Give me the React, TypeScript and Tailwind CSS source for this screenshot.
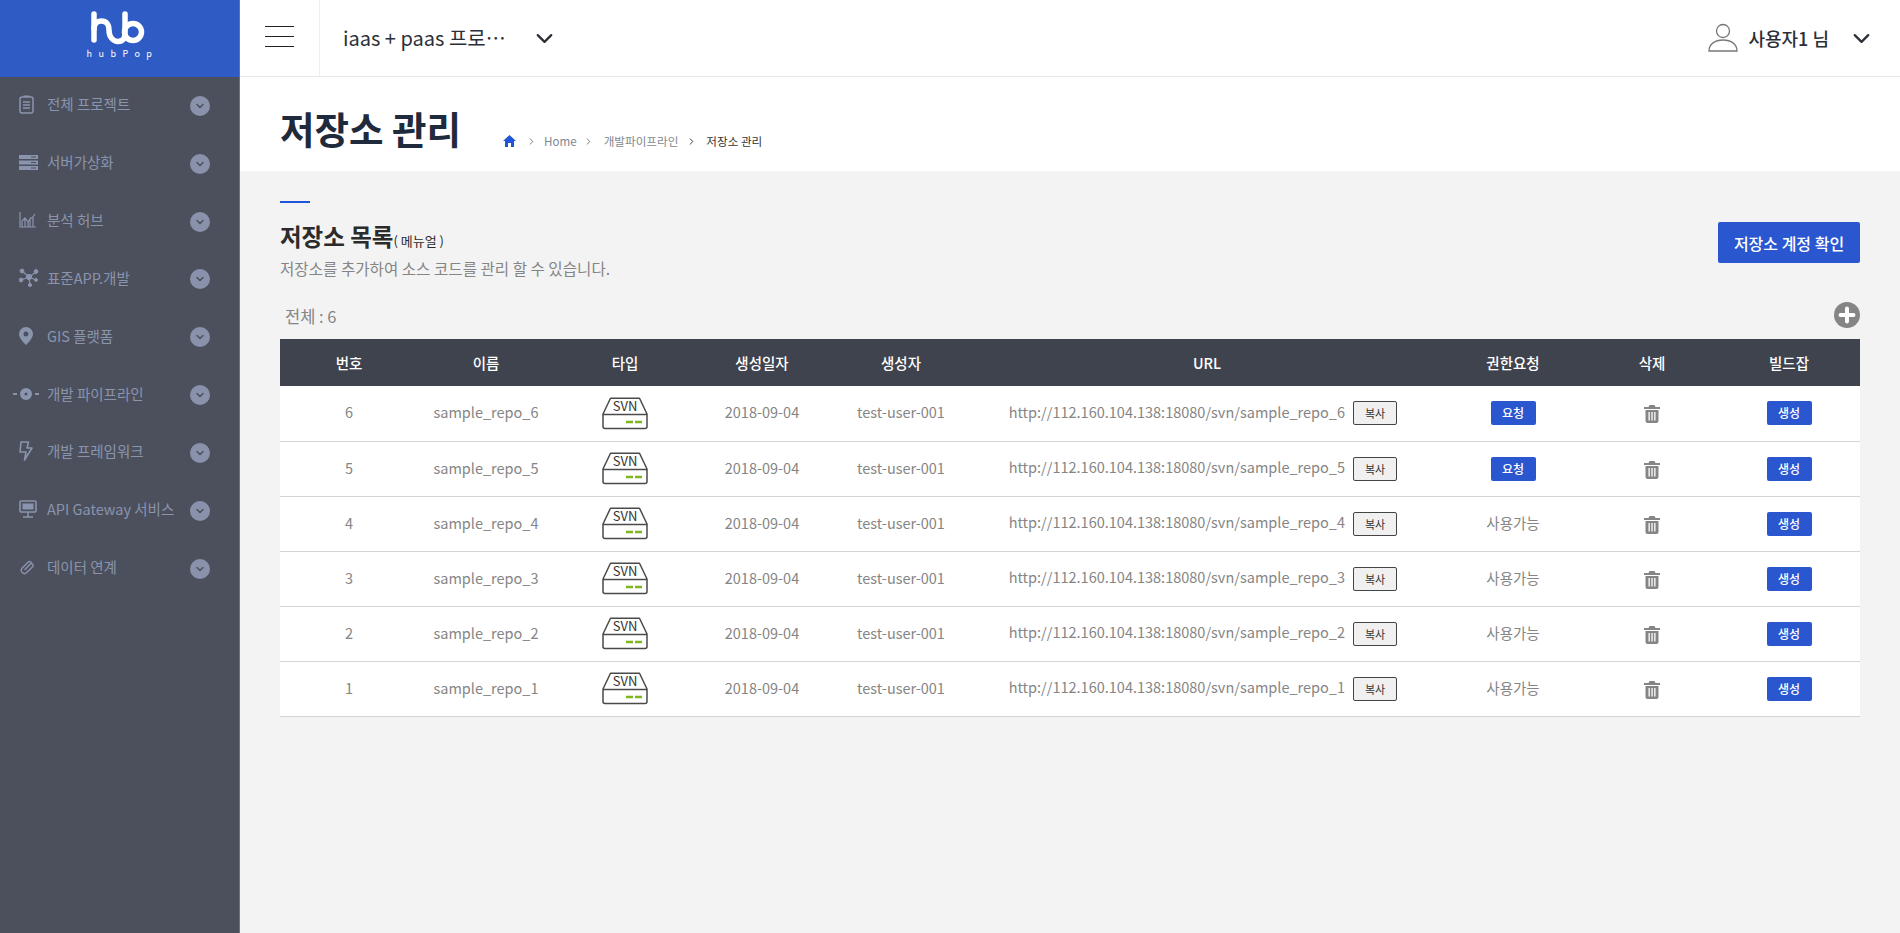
import type { ReactNode } from "react";
import { ChevronDown, ChevronRight } from "lucide-react";

const FONT = "font-['Noto_Sans_CJK_KR','Noto_Sans',sans-serif]";

function ClipboardIcon() {
  return (
    <svg width="15" height="19" viewBox="0 0 15 19" fill="none" stroke="currentColor" strokeWidth="1.5">
      <rect x="1" y="2" width="13" height="16" rx="2" />
      <path d="M4.5 1.2h6M4 7h7M4 10h7M4 13h7" />
    </svg>
  );
}

function ServerIcon() {
  return (
    <svg width="19" height="15" viewBox="0 0 19 15" fill="currentColor">
      <rect y="0" width="19" height="4" />
      <rect y="5.5" width="19" height="4" />
      <rect y="11" width="19" height="4" />
      <path d="M12 1.5h5v1h-5zM12 7h5v1h-5zM12 12.5h5v1h-5z" fill="#4c505d" />
    </svg>
  );
}

function ChartIcon() {
  return (
    <svg width="17" height="16" viewBox="0 0 17 16" fill="none" stroke="currentColor" strokeWidth="1.2">
      <path d="M1 0v15h16" />
      <path d="M3 15V9l3-3 3 4 2-3v8M6 15V6M9 15v-5M14 15V5l-3 2M14 5l2-3" />
    </svg>
  );
}

function NodesIcon() {
  return (
    <svg width="20" height="19" viewBox="0 0 20 19" fill="currentColor" stroke="currentColor">
      <path d="M10 9 3 3M10 9l7-5M10 9 2 12M10 9l1 8M10 9l7 3" strokeWidth="1.2" />
      <circle cx="10" cy="9" r="2.6" />
      <circle cx="3" cy="3" r="1.9" />
      <circle cx="17" cy="3.5" r="1.9" />
      <circle cx="2" cy="12" r="1.9" />
      <circle cx="11" cy="17" r="1.6" />
      <circle cx="17" cy="12" r="1.4" />
    </svg>
  );
}

function PinIcon() {
  return (
    <svg width="14" height="18" viewBox="0 0 14 18">
      <path
        fillRule="evenodd"
        fill="currentColor"
        d="M7 0a7 7 0 0 1 7 7c0 4-4.500 8.500-7 11C4.500 15.500 0 11 0 7a7 7 0 0 1 7-7Zm0 4.500a2.500 2.500 0 1 0 0 5 2.500 2.500 0 0 0 0-5Z"
      />
    </svg>
  );
}

function PipelineIcon() {
  return (
    <svg width="26" height="14" viewBox="0 0 26 14">
      <path d="M0 6h4v2H0zM22 6h4v2h-4z" fill="currentColor" />
      <path
        fillRule="evenodd"
        fill="currentColor"
        d="M13 1a6 6 0 1 1 0 12 6 6 0 0 1 0-12Zm0 4.500a1.500 1.500 0 1 0 0 3 1.500 1.500 0 0 0 0-3Z"
      />
    </svg>
  );
}

// outlined bolt, leaning like the one in the menu
function BoltIcon() {
  return (
    <svg width="14" height="20" viewBox="0 0 14 20" fill="none" stroke="currentColor" strokeWidth="1.6" strokeLinejoin="round">
      <path d="M2 1h7.500L8 7h5L5.500 19 7 11H1Z" />
    </svg>
  );
}

function ScreenIcon() {
  return (
    <svg width="18" height="18" viewBox="0 0 18 18" fill="none" stroke="currentColor">
      <rect x="1" y="1" width="16" height="11" rx="1" strokeWidth="1.6" />
      <rect x="3.500" y="3.500" width="11" height="6" fill="currentColor" strokeWidth="0" />
      <path d="M9 12v4.500M4 17h10" strokeWidth="1.6" />
    </svg>
  );
}

function LinkIcon() {
  return (
    <svg width="16" height="16" viewBox="0 0 16 16" fill="none" stroke="currentColor" strokeWidth="1.4" strokeLinecap="round">
      <path d="M6 10.500 11 5.200a1.800 1.800 0 0 1 2.600 2.500L7.500 13.800A3.200 3.200 0 0 1 3 9.300l6-6.100a2.300 2.300 0 0 1 3.200 0" />
    </svg>
  );
}

const MENU: { label: string; icon: ReactNode; iconClass?: string }[] = [
  { label: "전체 프로젝트", icon: <ClipboardIcon /> },
  { label: "서버가상화", icon: <ServerIcon /> },
  { label: "분석 허브", icon: <ChartIcon /> },
  { label: "표준APP.개발", icon: <NodesIcon /> },
  { label: "GIS 플랫폼", icon: <PinIcon /> },
  { label: "개발 파이프라인", icon: <PipelineIcon />, iconClass: "-ml-[6px]" },
  { label: "개발 프레임워크", icon: <BoltIcon /> },
  { label: "API Gateway 서비스", icon: <ScreenIcon /> },
  { label: "데이터 연계", icon: <LinkIcon /> },
];

function Logo() {
  return (
    <div className="h-[77px] bg-[#2f5bc4] flex flex-col items-center pt-[11px]">
      <svg width="56" height="34" viewBox="0 0 56 34" fill="none" stroke="white" strokeWidth="5.500" strokeLinecap="round" className="-ml-[3px]">
        <path d="M4 3v26" />
        <path d="M4 18c0-5 3-8 7.500-8S19 13 19 19c0 7 4 11.500 9 11.500s7-3 7-9V3" />
        <circle cx="43" cy="21" r="8.500" />
      </svg>
      <span className="mt-[2px] text-[9px] leading-[14px] tracking-[0.72em] pl-[6px] text-white">hubPop</span>
    </div>
  );
}

function Sidebar() {
  return (
    <aside className="w-[240px] shrink-0 bg-[#4c505d] border-r border-[#6d7280]">
      <Logo />
      {MENU.map((item) => (
        <div key={item.label} className="h-[57.85px] flex items-center pl-[19px] pr-[29px] text-[#8a94ad]">
          <div className="w-[28px] shrink-0 -mt-[3px] flex items-center">
            <span className={item.iconClass}>{item.icon}</span>
          </div>
          <span className="flex-1 -mt-[3px] text-[14.5px] leading-[20px] whitespace-nowrap">{item.label}</span>
          <span className="w-[20px] h-[20px] rounded-full bg-[#8a92ab] flex items-center justify-center">
            <ChevronDown size={12} strokeWidth={3} className="text-[#4c505d]" />
          </span>
        </div>
      ))}
    </aside>
  );
}

function TopBar() {
  return (
    <header className="h-[77px] bg-white border-b border-[#e8e8e8] flex items-stretch text-[#2b2f38]">
      <div className="w-[80px] shrink-0 border-r border-[#eeeeee] pl-[25px] pt-[26px] flex flex-col gap-[9px]">
        <div className="w-[29px] h-px bg-[#222]" />
        <div className="w-[29px] h-px bg-[#222]" />
        <div className="w-[29px] h-px bg-[#222]" />
      </div>
      <div className="flex items-center pl-[23px]">
        <span className="text-[20px] leading-[28px] w-[162px] whitespace-nowrap">iaas + paas 프로⋯</span>
        <ChevronDown size={27} strokeWidth={2} className="ml-[26px]" />
      </div>
      <div className="ml-auto flex items-center pr-[25px]">
        <svg width="30" height="30" viewBox="0 0 30 30" fill="none" stroke="#777" strokeWidth="1.300">
          <circle cx="15" cy="8" r="6.500" />
          <path d="M1 28c0-7 6-11 14-11s14 4 14 11Z" />
        </svg>
        <span className="ml-[10px] text-[18px] font-medium leading-[26px]">사용자1 님</span>
        <ChevronDown size={27} strokeWidth={2} className="ml-[19px]" />
      </div>
    </header>
  );
}

function TitleBand() {
  return (
    <div className="h-[94px] bg-white flex items-start pl-[40px] shrink-0">
      <h1 className="mt-[24px] text-[37.500px] leading-[54px] font-bold text-[#1f2a3c] whitespace-nowrap">저장소 관리</h1>
      <nav className="ml-[42px] mt-[55px] flex items-center text-[11.600px] leading-[18px] text-[#808890]">
        <svg width="13" height="12" viewBox="0 0 13 12" fill="#1f55d8">
          <path d="M6.500 0 13 6h-2v6H8V8H5v4H2V6H0Z" />
        </svg>
        <ChevronRight size={11} className="ml-[10px] text-[#777]" />
        <span className="ml-[7px]">Home</span>
        <ChevronRight size={11} className="ml-[6px] text-[#777]" />
        <span className="ml-[10px]">개발파이프라인</span>
        <ChevronRight size={11} className="ml-[8px] text-[#333]" />
        <span className="ml-[9px] text-[#333]">저장소 관리</span>
      </nav>
    </div>
  );
}

function SvnIcon() {
  return (
    <svg width="46" height="33" viewBox="0 0 46 33" fill="none" className="mx-auto">
      <path
        d="M1 17 8.500 1.200h29L45 17v12.500a2 2 0 0 1-2 2H3a2 2 0 0 1-2-2Z M1 17.500h44"
        stroke="#4a4a4a"
        strokeWidth="1.500"
        strokeLinejoin="round"
      />
      <text x="23" y="14" textAnchor="middle" fontSize="13" fill="#333" fontFamily="'Noto Sans CJK KR', sans-serif">
        SVN
      </text>
      <path d="M24 25h7M33 25h7" stroke="#7fb71e" strokeWidth="2.500" />
    </svg>
  );
}

function TrashIcon() {
  return (
    <svg width="16" height="18" viewBox="0 0 16 18" className="mx-auto">
      <path
        fill="#858585"
        fillRule="evenodd"
        d="M5.500 0h5l1 2H16v2H0V2h4.500ZM1.500 5h13v11a2 2 0 0 1-2 2h-9a2 2 0 0 1-2-2Zm3 2v8.500h1.300V7Zm2.900 0v8.500h1.300V7Zm2.800 0v8.500h1.300V7Z"
      />
    </svg>
  );
}

function BlueButton({ children }: { children: ReactNode }) {
  return (
    <button className="w-[45px] h-[24px] rounded-[2px] bg-[#2a57cf] text-white text-[12px] font-medium leading-[24px]">
      {children}
    </button>
  );
}

const COLUMNS = [
  { title: "번호", width: "w-[138px]" },
  { title: "이름", width: "w-[136px]" },
  { title: "타입", width: "w-[142px]" },
  { title: "생성일자", width: "w-[132px]" },
  { title: "생성자", width: "w-[146px]" },
  { title: "URL", width: "w-[466px]" },
  { title: "권한요청", width: "w-[146px]" },
  { title: "삭제", width: "w-[132px]" },
  { title: "빌드잡", width: "w-[142px]" },
];

const REPOS = [6, 5, 4, 3, 2, 1];

function RepoTable() {
  return (
    <table className="w-full table-fixed border-collapse bg-white text-[14.500px] text-[#858585]">
      <colgroup>
        {COLUMNS.map((c) => (
          <col key={c.title} className={c.width} />
        ))}
      </colgroup>
      <thead>
        <tr className="h-[47px] bg-[#3f434e] text-white">
          {COLUMNS.map((c) => (
            <th key={c.title} className="text-[14.500px] font-medium text-center p-0">
              {c.title}
            </th>
          ))}
        </tr>
      </thead>
      <tbody>
        {REPOS.map((n, i) => (
          <tr key={n} className="h-[55px] border-b border-[#d5d5d5] text-center">
            <td className="pb-[2px]">{n}</td>
            <td className="pb-[2px]">sample_repo_{n}</td>
            <td>
              <SvnIcon />
            </td>
            <td className="pb-[2px]">2018-09-04</td>
            <td className="pb-[2px]">test-user-001</td>
            <td>
              <div className="flex items-center justify-end pr-[43px]">
                <span className="whitespace-nowrap -mt-[3px]">
                  http://112.160.104.138:18080/svn/sample_repo_{n}
                </span>
                <button className="ml-[8px] w-[44px] h-[24px] rounded-[2px] border border-[#444] bg-[#f0f0f0] text-[#333] text-[11px] leading-[22px]">
                  복사
                </button>
              </div>
            </td>
            <td className={i < 2 ? "" : "pb-[2px]"}>{i < 2 ? <BlueButton>요청</BlueButton> : "사용가능"}</td>
            <td className="pt-[2px]">
              <TrashIcon />
            </td>
            <td>
              <BlueButton>생성</BlueButton>
            </td>
          </tr>
        ))}
      </tbody>
    </table>
  );
}

function Content() {
  return (
    <div className="flex-1 bg-[#f3f3f3] px-[40px] pt-[30px]">
      <div className="w-[30px] h-[2px] bg-[#1f55d8]" />
      <div className="flex items-start justify-between">
        <div>
          <div className="mt-[16px] flex items-baseline text-[#2b2b2b]">
            <h2 className="text-[23.500px] leading-[34px] font-bold">저장소 목록</h2>
            <span className="text-[13px]">( 메뉴얼 )</span>
          </div>
          <p className="mt-[3px] text-[15.600px] leading-[24px] text-[#858585]">저장소를 추가하여 소스 코드를 관리 할 수 있습니다.</p>
        </div>
        <button className="mt-[19px] w-[142px] h-[41px] rounded-[2px] bg-[#2a57cf] text-white text-[16px] font-medium">
          저장소 계정 확인
        </button>
      </div>
      <div className="mt-[15px] h-[44px] pb-[5px] flex items-center justify-between pl-[5px]">
        <span className="mt-[4px] text-[16.500px] text-[#858585]">전체 : 6</span>
        <svg width="26" height="26" viewBox="0 0 26 26">
          <circle cx="13" cy="13" r="13" fill="#858585" />
          <path d="M13 6.500v13M6.500 13h13" stroke="white" strokeWidth="4" strokeLinecap="round" />
        </svg>
      </div>
      <RepoTable />
    </div>
  );
}

export default function App() {
  return (
    <div className={`flex h-[933px] overflow-hidden ${FONT}`}>
      <Sidebar />
      <main className="flex-1 min-w-0 flex flex-col">
        <TopBar />
        <TitleBand />
        <Content />
      </main>
    </div>
  );
}
